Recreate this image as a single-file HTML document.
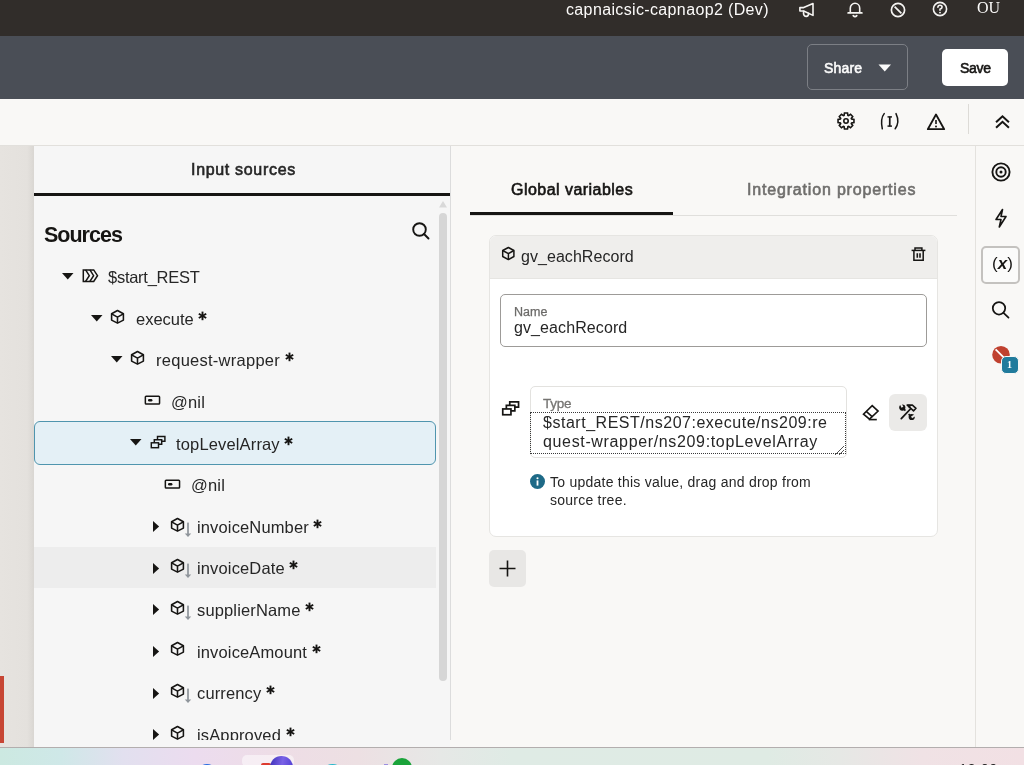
<!DOCTYPE html>
<html><head><meta charset="utf-8"><title>Integration</title>
<style>
html,body{margin:0;padding:0;}
body{width:1024px;height:765px;position:relative;overflow:hidden;background:#f9f8f6;font-family:"Liberation Sans",sans-serif;}
.t{position:absolute;white-space:nowrap;will-change:transform;}
.r{position:absolute;display:block;}
.ast{display:inline-block;vertical-align:4.1px;margin-left:4.6px;}
</style></head><body>
<div class="r" style="left:0px;top:0px;width:1024px;height:36px;background:#312d2a"></div>
<div class="t" style="left:566px;top:-0.34px;font-size:16px;line-height:20px;font-weight:400;color:#fcfbfa;letter-spacing:0.36px;font-family:'Liberation Sans', sans-serif;">capnaicsic-capnaop2 (Dev)</div>
<svg class="r" style="left:797px;top:0px;" width="20" height="20" viewBox="0 0 20 20"><g fill="none" stroke="#f5f4f2" stroke-width="1.6" stroke-linejoin="round" stroke-linecap="round"><path d="M2.9 7.6 H6.7 L16 3.6 V15.4 L6.7 11 H2.9 Z"/><path d="M6.6 11.2 Q6 16.6 9.2 16.4 Q11.6 16.2 11.6 13.4"/></g></svg>
<svg class="r" style="left:846px;top:0px;" width="18" height="20" viewBox="0 0 18 20"><g fill="none" stroke="#f5f4f2" stroke-width="1.6" stroke-linecap="round" stroke-linejoin="round"><path d="M4.3 12.6 V8.2 A4.7 4.9 0 0 1 13.7 8.2 V12.6"/><path d="M7.2 15.6 Q9 17.6 10.8 15.6"/></g><path d="M2.2 12.9 H15.8" stroke="#f5f4f2" stroke-width="1.9" stroke-linecap="round"/></svg>
<svg class="r" style="left:889.3px;top:0.7px;" width="18" height="18" viewBox="0 0 18 18"><g fill="none" stroke="#f5f4f2" stroke-width="1.7"><circle cx="9" cy="9" r="6.6"/><path d="M5.6 5.6 L12.4 12.4"/></g></svg>
<svg class="r" style="left:930.5px;top:0.2px;" width="18" height="18" viewBox="0 0 18 18"><g fill="none" stroke="#f5f4f2" stroke-width="1.6" stroke-linecap="round"><circle cx="9" cy="9" r="6.6"/><path d="M6.9 7.3 Q7 5.2 9 5.2 Q11.1 5.2 11.1 7.1 Q11.1 8.5 9 9.3 V10.2"/></g><circle cx="9" cy="12.6" r="0.95" fill="#f5f4f2"/></svg>
<div class="t" style="left:977.3px;top:-2.04px;font-size:16px;line-height:20px;font-weight:400;color:#fcfbfa;letter-spacing:0px;font-family:'Liberation Serif', serif;">OU</div>
<div class="r" style="left:0px;top:36px;width:1024px;height:63px;background:#4a4e56"></div>
<div class="r" style="left:807px;top:44px;width:101px;height:46px;border:1px solid #7c7f85;border-radius:5px;box-sizing:border-box"></div>
<div class="t" style="left:823.8px;top:59.15px;font-size:14px;line-height:18px;font-weight:400;color:#fbfbfb;letter-spacing:0.2px;font-family:'Liberation Sans', sans-serif;-webkit-text-stroke:0.6px currentColor;">Share</div>
<svg class="r" style="left:878px;top:64px;" width="14" height="8" viewBox="0 0 14 8"><path d="M0.5 0.5 H13 L6.75 7.5 Z" fill="#fbfbfb"/></svg>
<div class="r" style="left:942px;top:49px;width:66px;height:37px;background:#ffffff;border-radius:5px"></div>
<div class="t" style="left:959.6px;top:59.15px;font-size:14px;line-height:18px;font-weight:400;color:#161513;letter-spacing:-0.3px;font-family:'Liberation Sans', sans-serif;-webkit-text-stroke:0.6px currentColor;">Save</div>
<div class="r" style="left:0px;top:99px;width:1024px;height:46px;background:#f9f8f6"></div>
<div class="r" style="left:0px;top:145px;width:1024px;height:1px;background:#e2e0dc"></div>
<svg class="r" style="left:835.5px;top:111.2px;" width="20" height="20" viewBox="0 0 20 20"><g fill="none" stroke="#161513" stroke-width="1.6" stroke-linejoin="miter"><path d="M8.09 4.42 L8.47 2.05 L11.53 2.05 L11.91 4.42 L12.59 4.70 L14.54 3.29 L16.71 5.46 L15.30 7.41 L15.58 8.09 L17.95 8.47 L17.95 11.53 L15.58 11.91 L15.30 12.59 L16.71 14.54 L14.54 16.71 L12.59 15.30 L11.91 15.58 L11.53 17.95 L8.47 17.95 L8.09 15.58 L7.41 15.30 L5.46 16.71 L3.29 14.54 L4.70 12.59 L4.42 11.91 L2.05 11.53 L2.05 8.47 L4.42 8.09 L4.70 7.41 L3.29 5.46 L5.46 3.29 L7.41 4.70 Z"/><circle cx="10" cy="10" r="2.2"/></g></svg>
<svg class="r" style="left:879px;top:112px;" width="22" height="19" viewBox="0 0 22 19"><g fill="none" stroke="#161513" stroke-width="1.5" stroke-linecap="round"><path d="M5.2 1.6 Q1.2 6.5 3.3 16.8"/><path d="M17 1.6 Q21 10 16.2 16.8"/></g><g fill="#161513"><rect x="9.9" y="4.5" width="1.7" height="10"/><rect x="8.5" y="4.2" width="4.5" height="1.4"/><rect x="8.5" y="13.4" width="4.5" height="1.4"/></g></svg>
<svg class="r" style="left:926px;top:112px;" width="20" height="19" viewBox="0 0 20 19"><g fill="none" stroke="#161513" stroke-width="1.8" stroke-linejoin="round"><path d="M10 2.5 L18.2 17.2 H1.8 Z"/></g><path d="M10 8 V12" stroke="#161513" stroke-width="1.6"/><circle cx="10" cy="14.4" r="1" fill="#161513"/></svg>
<div class="r" style="left:968px;top:104px;width:1px;height:30px;background:#dddbd7"></div>
<svg class="r" style="left:994px;top:114px;" width="17" height="16" viewBox="0 0 17 16"><g fill="none" stroke="#161513" stroke-width="2" stroke-linecap="square"><path d="M2.8 7.5 L8.5 2.3 L14.2 7.5"/><path d="M2.8 13 L8.5 7.8 L14.2 13"/></g></svg>
<div class="r" style="left:0px;top:146px;width:34px;height:601px;background:linear-gradient(90deg,#e6e3df 0,#e4e1dd 80%,#d9d6d2 100%)"></div>
<div class="r" style="left:0px;top:676px;width:4px;height:67px;background:#c74634"></div>
<div class="r" style="left:34px;top:146px;width:416px;height:601px;background:#f6f6f6"></div>
<div class="r" style="left:450px;top:146px;width:1px;height:594px;background:#dcdcdc"></div>
<div class="t" style="left:190.8px;top:160.16px;font-size:16px;line-height:20px;font-weight:400;color:#262626;letter-spacing:0.68px;font-family:'Liberation Sans', sans-serif;-webkit-text-stroke:0.6px currentColor;">Input sources</div>
<div class="r" style="left:34px;top:193px;width:416px;height:3px;background:#161513"></div>
<div class="t" style="left:44.4px;top:222.15px;font-size:21.5px;line-height:27px;font-weight:700;color:#161513;letter-spacing:-1.0px;font-family:'Liberation Sans', sans-serif;">Sources</div>
<svg class="r" style="left:409px;top:221px;" width="22" height="20" viewBox="0 0 22 20"><g fill="none" stroke="#161513" stroke-width="1.9" stroke-linecap="round"><circle cx="10.5" cy="8.5" r="6.3"/><path d="M15 13 L19.5 17.5"/></g></svg>
<svg class="r" style="left:438px;top:200px;" width="10" height="8" viewBox="0 0 10 8"><path d="M1 7.5 L5 1 L9 7.5 Z" fill="#d9d9d9"/></svg>
<div class="r" style="left:439px;top:213px;width:8px;height:468px;background:#d6d6d6;border-radius:4px"></div>
<div class="r" style="left:34px;top:421px;width:402px;height:44px;background:#e4f0f6;border:1px solid #4f95ae;border-radius:6px;box-sizing:border-box"></div>
<div class="r" style="left:34px;top:547px;width:402px;height:41px;background:#ededed"></div>
<div class="clip" style="position:absolute;left:34px;top:146px;width:416px;height:594px;overflow:hidden"><div style="position:absolute;left:-34px;top:-146px;width:1024px;height:765px"><svg class="r" style="left:62px;top:273.0px;" width="12" height="7" viewBox="0 0 12 7"><path d="M0 0 H11.5 L5.75 6.5 Z" fill="#161513"/></svg>
<svg class="r" style="left:81.5px;top:268.5px;" width="17" height="14" viewBox="0 0 17 14"><g fill="none" stroke="#161513" stroke-width="1.5" stroke-linejoin="miter"><path d="M1.3 0.9 H11.7 L15.5 6.65 L11.7 12.4 H1.3 Z"/><path d="M3.6 0.9 L7.3 6.65 L3.6 12.4"/><path d="M7.9 0.9 L11.6 6.65 L7.9 12.4"/></g></svg>
<div class="t" style="left:108px;top:267.28px;font-size:16.5px;line-height:21px;font-weight:400;color:#262626;letter-spacing:-0.27px;font-family:'Liberation Sans', sans-serif;">$start_REST</div>
<svg class="r" style="left:91px;top:314.6px;" width="12" height="7" viewBox="0 0 12 7"><path d="M0 0 H11.5 L5.75 6.5 Z" fill="#161513"/></svg>
<svg class="r" style="left:110.2px;top:308.6px;" width="22" height="21" viewBox="0 0 22 21"><g fill="none" stroke="#161513" stroke-width="1.55" stroke-linejoin="round"><path d="M7.5 1.5 L13.4 4.8 V11.1 L7.5 14.1 L1.6 11.1 V4.8 Z"/><path d="M1.6 4.8 L7.5 8.2 L13.4 4.8 M7.5 8.2 V14.1"/></g></svg>
<div class="t" style="left:136px;top:308.88px;font-size:16.5px;line-height:21px;font-weight:400;color:#262626;letter-spacing:0.0px;font-family:'Liberation Sans', sans-serif;">execute<svg class="ast" width="9" height="10" viewBox="0 0 9 10"><g stroke="#161513" stroke-width="1.9"><path d="M4.5 0.6 V9.2"/><path d="M0.8 2.75 L8.2 7.05"/><path d="M0.8 7.05 L8.2 2.75"/></g></svg></div>
<svg class="r" style="left:110.5px;top:356.2px;" width="12" height="7" viewBox="0 0 12 7"><path d="M0 0 H11.5 L5.75 6.5 Z" fill="#161513"/></svg>
<svg class="r" style="left:130.2px;top:350.2px;" width="22" height="21" viewBox="0 0 22 21"><g fill="none" stroke="#161513" stroke-width="1.55" stroke-linejoin="round"><path d="M7.5 1.5 L13.4 4.8 V11.1 L7.5 14.1 L1.6 11.1 V4.8 Z"/><path d="M1.6 4.8 L7.5 8.2 L13.4 4.8 M7.5 8.2 V14.1"/></g></svg>
<div class="t" style="left:156.3px;top:350.48px;font-size:16.5px;line-height:21px;font-weight:400;color:#262626;letter-spacing:0.26px;font-family:'Liberation Sans', sans-serif;">request-wrapper<svg class="ast" width="9" height="10" viewBox="0 0 9 10"><g stroke="#161513" stroke-width="1.9"><path d="M4.5 0.6 V9.2"/><path d="M0.8 2.75 L8.2 7.05"/><path d="M0.8 7.05 L8.2 2.75"/></g></svg></div>
<svg class="r" style="left:144.2px;top:395.3px;" width="17" height="11" viewBox="0 0 17 11"><rect x="1.35" y="1.25" width="14.2" height="7.8" rx="0.8" fill="none" stroke="#161513" stroke-width="1.5"/><rect x="4" y="4" width="4.4" height="2.5" rx="1.2" fill="#161513"/></svg>
<div class="t" style="left:171.2px;top:392.08px;font-size:16.5px;line-height:21px;font-weight:400;color:#262626;letter-spacing:0.2px;font-family:'Liberation Sans', sans-serif;">@nil</div>
<svg class="r" style="left:130.1px;top:439.4px;" width="12" height="7" viewBox="0 0 12 7"><path d="M0 0 H11.5 L5.75 6.5 Z" fill="#161513"/></svg>
<svg class="r" style="left:150px;top:435px;" width="17" height="14" viewBox="0 0 17 14"><g fill="none" stroke="#161513" stroke-width="1.45"><rect x="1.3" y="7.8" width="7.2" height="4.9"/><path d="M4.3 7.8 V4.8 H11.7 V9.3 H8.5"/><path d="M7.5 4.8 V1.45 H14.9 V6.2 H11.7"/></g></svg>
<div class="t" style="left:176.2px;top:433.68px;font-size:16.5px;line-height:21px;font-weight:400;color:#262626;letter-spacing:0.15px;font-family:'Liberation Sans', sans-serif;">topLevelArray<svg class="ast" width="9" height="10" viewBox="0 0 9 10"><g stroke="#161513" stroke-width="1.9"><path d="M4.5 0.6 V9.2"/><path d="M0.8 2.75 L8.2 7.05"/><path d="M0.8 7.05 L8.2 2.75"/></g></svg></div>
<svg class="r" style="left:164.2px;top:478.5px;" width="17" height="11" viewBox="0 0 17 11"><rect x="1.35" y="1.25" width="14.2" height="7.8" rx="0.8" fill="none" stroke="#161513" stroke-width="1.5"/><rect x="4" y="4" width="4.4" height="2.5" rx="1.2" fill="#161513"/></svg>
<div class="t" style="left:190.9px;top:475.28px;font-size:16.5px;line-height:21px;font-weight:400;color:#262626;letter-spacing:0.2px;font-family:'Liberation Sans', sans-serif;">@nil</div>
<svg class="r" style="left:153px;top:521.1px;" width="7" height="12" viewBox="0 0 7 12"><path d="M0 0 V11 L6.1 5.5 Z" fill="#161513"/></svg>
<svg class="r" style="left:169.6px;top:516.6px;" width="22" height="21" viewBox="0 0 22 21"><g fill="none" stroke="#161513" stroke-width="1.55" stroke-linejoin="round"><path d="M7.5 1.5 L13.4 4.8 V11.1 L7.5 14.1 L1.6 11.1 V4.8 Z"/><path d="M1.6 4.8 L7.5 8.2 L13.4 4.8 M7.5 8.2 V14.1"/></g><rect x="17.15" y="5.6" width="1.7" height="11.5" fill="#8f959b"/><path d="M14.8 16.6 H21.2 L18 20 Z" fill="#8f959b"/></svg>
<div class="t" style="left:196.6px;top:516.88px;font-size:16.5px;line-height:21px;font-weight:400;color:#262626;letter-spacing:0.14px;font-family:'Liberation Sans', sans-serif;">invoiceNumber<svg class="ast" width="9" height="10" viewBox="0 0 9 10"><g stroke="#161513" stroke-width="1.9"><path d="M4.5 0.6 V9.2"/><path d="M0.8 2.75 L8.2 7.05"/><path d="M0.8 7.05 L8.2 2.75"/></g></svg></div>
<svg class="r" style="left:153px;top:562.7px;" width="7" height="12" viewBox="0 0 7 12"><path d="M0 0 V11 L6.1 5.5 Z" fill="#161513"/></svg>
<svg class="r" style="left:169.6px;top:558.2px;" width="22" height="21" viewBox="0 0 22 21"><g fill="none" stroke="#161513" stroke-width="1.55" stroke-linejoin="round"><path d="M7.5 1.5 L13.4 4.8 V11.1 L7.5 14.1 L1.6 11.1 V4.8 Z"/><path d="M1.6 4.8 L7.5 8.2 L13.4 4.8 M7.5 8.2 V14.1"/></g><rect x="17.15" y="5.6" width="1.7" height="11.5" fill="#8f959b"/><path d="M14.8 16.6 H21.2 L18 20 Z" fill="#8f959b"/></svg>
<div class="t" style="left:196.6px;top:558.48px;font-size:16.5px;line-height:21px;font-weight:400;color:#262626;letter-spacing:0.14px;font-family:'Liberation Sans', sans-serif;">invoiceDate<svg class="ast" width="9" height="10" viewBox="0 0 9 10"><g stroke="#161513" stroke-width="1.9"><path d="M4.5 0.6 V9.2"/><path d="M0.8 2.75 L8.2 7.05"/><path d="M0.8 7.05 L8.2 2.75"/></g></svg></div>
<svg class="r" style="left:153px;top:604.3px;" width="7" height="12" viewBox="0 0 7 12"><path d="M0 0 V11 L6.1 5.5 Z" fill="#161513"/></svg>
<svg class="r" style="left:169.6px;top:599.8px;" width="22" height="21" viewBox="0 0 22 21"><g fill="none" stroke="#161513" stroke-width="1.55" stroke-linejoin="round"><path d="M7.5 1.5 L13.4 4.8 V11.1 L7.5 14.1 L1.6 11.1 V4.8 Z"/><path d="M1.6 4.8 L7.5 8.2 L13.4 4.8 M7.5 8.2 V14.1"/></g><rect x="17.15" y="5.6" width="1.7" height="11.5" fill="#8f959b"/><path d="M14.8 16.6 H21.2 L18 20 Z" fill="#8f959b"/></svg>
<div class="t" style="left:196.6px;top:600.08px;font-size:16.5px;line-height:21px;font-weight:400;color:#262626;letter-spacing:0.14px;font-family:'Liberation Sans', sans-serif;">supplierName<svg class="ast" width="9" height="10" viewBox="0 0 9 10"><g stroke="#161513" stroke-width="1.9"><path d="M4.5 0.6 V9.2"/><path d="M0.8 2.75 L8.2 7.05"/><path d="M0.8 7.05 L8.2 2.75"/></g></svg></div>
<svg class="r" style="left:153px;top:645.9000000000001px;" width="7" height="12" viewBox="0 0 7 12"><path d="M0 0 V11 L6.1 5.5 Z" fill="#161513"/></svg>
<svg class="r" style="left:169.6px;top:641.4000000000001px;" width="22" height="21" viewBox="0 0 22 21"><g fill="none" stroke="#161513" stroke-width="1.55" stroke-linejoin="round"><path d="M7.5 1.5 L13.4 4.8 V11.1 L7.5 14.1 L1.6 11.1 V4.8 Z"/><path d="M1.6 4.8 L7.5 8.2 L13.4 4.8 M7.5 8.2 V14.1"/></g></svg>
<div class="t" style="left:196.6px;top:641.68px;font-size:16.5px;line-height:21px;font-weight:400;color:#262626;letter-spacing:0.14px;font-family:'Liberation Sans', sans-serif;">invoiceAmount<svg class="ast" width="9" height="10" viewBox="0 0 9 10"><g stroke="#161513" stroke-width="1.9"><path d="M4.5 0.6 V9.2"/><path d="M0.8 2.75 L8.2 7.05"/><path d="M0.8 7.05 L8.2 2.75"/></g></svg></div>
<svg class="r" style="left:153px;top:687.5px;" width="7" height="12" viewBox="0 0 7 12"><path d="M0 0 V11 L6.1 5.5 Z" fill="#161513"/></svg>
<svg class="r" style="left:169.6px;top:683.0px;" width="22" height="21" viewBox="0 0 22 21"><g fill="none" stroke="#161513" stroke-width="1.55" stroke-linejoin="round"><path d="M7.5 1.5 L13.4 4.8 V11.1 L7.5 14.1 L1.6 11.1 V4.8 Z"/><path d="M1.6 4.8 L7.5 8.2 L13.4 4.8 M7.5 8.2 V14.1"/></g><rect x="17.15" y="5.6" width="1.7" height="11.5" fill="#8f959b"/><path d="M14.8 16.6 H21.2 L18 20 Z" fill="#8f959b"/></svg>
<div class="t" style="left:196.6px;top:683.28px;font-size:16.5px;line-height:21px;font-weight:400;color:#262626;letter-spacing:0.14px;font-family:'Liberation Sans', sans-serif;">currency<svg class="ast" width="9" height="10" viewBox="0 0 9 10"><g stroke="#161513" stroke-width="1.9"><path d="M4.5 0.6 V9.2"/><path d="M0.8 2.75 L8.2 7.05"/><path d="M0.8 7.05 L8.2 2.75"/></g></svg></div>
<svg class="r" style="left:153px;top:729.1px;" width="7" height="12" viewBox="0 0 7 12"><path d="M0 0 V11 L6.1 5.5 Z" fill="#161513"/></svg>
<svg class="r" style="left:169.6px;top:724.6px;" width="22" height="21" viewBox="0 0 22 21"><g fill="none" stroke="#161513" stroke-width="1.55" stroke-linejoin="round"><path d="M7.5 1.5 L13.4 4.8 V11.1 L7.5 14.1 L1.6 11.1 V4.8 Z"/><path d="M1.6 4.8 L7.5 8.2 L13.4 4.8 M7.5 8.2 V14.1"/></g></svg>
<div class="t" style="left:196.6px;top:724.88px;font-size:16.5px;line-height:21px;font-weight:400;color:#262626;letter-spacing:0.14px;font-family:'Liberation Sans', sans-serif;">isApproved<svg class="ast" width="9" height="10" viewBox="0 0 9 10"><g stroke="#161513" stroke-width="1.9"><path d="M4.5 0.6 V9.2"/><path d="M0.8 2.75 L8.2 7.05"/><path d="M0.8 7.05 L8.2 2.75"/></g></svg></div>
</div></div>
<div class="r" style="left:451px;top:146px;width:524px;height:601px;background:#f9f8f6"></div>
<div class="r" style="left:975px;top:146px;width:1px;height:601px;background:#e4e2de"></div>
<div class="r" style="left:976px;top:146px;width:48px;height:601px;background:#f9f8f6"></div>
<div class="t" style="left:511.1px;top:179.66px;font-size:16px;line-height:20px;font-weight:400;color:#161513;letter-spacing:0.46px;font-family:'Liberation Sans', sans-serif;-webkit-text-stroke:0.6px currentColor;">Global variables</div>
<div class="t" style="left:747.4px;top:179.86px;font-size:16px;line-height:20px;font-weight:400;color:#6f6e6c;letter-spacing:0.82px;font-family:'Liberation Sans', sans-serif;-webkit-text-stroke:0.6px currentColor;">Integration properties</div>
<div class="r" style="left:470px;top:215px;width:487px;height:1px;background:#e0dfdc"></div>
<div class="r" style="left:470px;top:212px;width:203px;height:3px;background:#161513"></div>
<div class="r" style="left:489px;top:235px;width:449px;height:302px;background:#ffffff;border:1px solid #e6e5e2;border-radius:7px;box-sizing:border-box"></div>
<div class="r" style="left:490px;top:236px;width:447px;height:42px;background:#efeeec;border-radius:6px 6px 0 0;border-bottom:1px solid #e6e5e2"></div>
<svg class="r" style="left:501px;top:246px;" width="15" height="16" viewBox="0 0 15 16"><g fill="none" stroke="#161513" stroke-width="1.5" stroke-linejoin="round"><path d="M7.4 1.5 L12.9 4.5 V10.5 L7.4 13.6 L1.7 10.5 V4.5 Z"/><path d="M1.7 4.5 L7.4 7.7 L12.9 4.5 M7.4 7.7 V13.6"/></g></svg>
<div class="t" style="left:521.4px;top:246.86px;font-size:16px;line-height:20px;font-weight:400;color:#262626;letter-spacing:0.05px;font-family:'Liberation Sans', sans-serif;">gv_eachRecord</div>
<svg class="r" style="left:910px;top:245px;" width="18" height="18" viewBox="0 0 18 18"><g fill="none" stroke="#161513" stroke-width="1.5"><path d="M1.6 5.4 H15.4"/><path d="M5 5.4 V2.9 H11.9 V5.4"/><path d="M3.9 5.4 V15.2 H13.2 V5.4"/><path d="M7.3 8.2 V12.7 M10 8.2 V12.7" stroke-width="1.6"/></g></svg>
<div class="r" style="left:500px;top:294px;width:427px;height:53px;border:1px solid #9d9b98;border-radius:5px;box-sizing:border-box;background:#fff"></div>
<div class="t" style="left:514px;top:303.67px;font-size:12.5px;line-height:16px;font-weight:400;color:#6b6a68;letter-spacing:0px;font-family:'Liberation Sans', sans-serif;-webkit-text-stroke:0.25px currentColor;">Name</div>
<div class="t" style="left:514px;top:317.86px;font-size:16px;line-height:20px;font-weight:400;color:#262626;letter-spacing:0.1px;font-family:'Liberation Sans', sans-serif;">gv_eachRecord</div>
<svg class="r" style="left:500px;top:398px;" width="22" height="20" viewBox="0 0 22 20"><g fill="none" stroke="#161513" stroke-width="1.7"><rect x="2.75" y="10.95" width="8.2" height="5.8"/><path d="M6.35 10.95 V7.35 H14.85 V12.85 H10.95"/><path d="M9.75 7.35 V3.85 H18.55 V9.05 H14.85"/></g></svg>
<div class="r" style="left:530px;top:386px;width:317px;height:72px;border:1px solid #e3e2df;border-radius:5px;box-sizing:border-box;background:#fff"></div>
<div class="t" style="left:543.2px;top:394.92px;font-size:13.5px;line-height:17px;font-weight:400;color:#757472;letter-spacing:-0.25px;font-family:'Liberation Sans', sans-serif;-webkit-text-stroke:0.3px currentColor;">Type</div>
<div class="r" style="left:530px;top:412px;width:316px;height:42px;border:1px dotted #3a3a3a;box-sizing:border-box"></div>
<div class="t" style="left:543px;top:412.76px;font-size:16px;line-height:20px;font-weight:400;color:#262626;letter-spacing:0.52px;font-family:'Liberation Sans', sans-serif;">$start_REST/ns207:execute/ns209:re</div>
<div class="t" style="left:543px;top:432.36px;font-size:16px;line-height:20px;font-weight:400;color:#262626;letter-spacing:0.65px;font-family:'Liberation Sans', sans-serif;">quest-wrapper/ns209:topLevelArray</div>
<svg class="r" style="left:833px;top:444px;" width="12" height="12" viewBox="0 0 12 12"><g stroke="#555" stroke-width="1"><path d="M2 11 L11 2"/><path d="M6 11 L11 6"/></g></svg>
<svg class="r" style="left:860px;top:403px;" width="21" height="20" viewBox="0 0 21 20"><g fill="none" stroke="#161513" stroke-width="1.6" stroke-linejoin="miter"><path d="M12.2 2.6 L18.1 8.1 L9.5 16.2 L3.5 11.1 Z"/><path d="M6.2 8.4 L12.4 13.9"/><path d="M8.8 16.6 H16.8"/></g></svg>
<div class="r" style="left:889px;top:394px;width:38px;height:37px;background:#ebeae8;border-radius:6px"></div>
<svg class="r" style="left:895px;top:400px;" width="26" height="24" viewBox="0 0 26 24"><path d="M6.3 18.65 L15.4 9" stroke="#161513" stroke-width="1.8" stroke-linecap="round"/><path d="M12.2 5.1 H17.4 L21 8.3 L18.5 10.9 L15.2 7.7 Z" fill="none" stroke="#161513" stroke-width="1.6" stroke-linejoin="round"/><path d="M12.5 4.8 H15 L15.6 7.2 L14 8.5 Z" fill="#161513"/><circle cx="7.3" cy="7.6" r="3.1" fill="#161513"/><path d="M7.4 7.3 L5.6 3.6" stroke="#ebeae8" stroke-width="2"/><path d="M8.5 8.6 L10.4 10.6" stroke="#161513" stroke-width="1.7"/><circle cx="16.7" cy="17" r="3.1" fill="#161513"/><path d="M16.6 17.3 L20.6 14.9" stroke="#ebeae8" stroke-width="2"/><path d="M15.4 15.8 L13.6 14.2" stroke="#161513" stroke-width="1.7"/></svg>
<svg class="r" style="left:530px;top:474px;" width="15" height="15" viewBox="0 0 15 15"><circle cx="7.5" cy="7.5" r="7.5" fill="#1e6a87"/><rect x="6.6" y="6.4" width="1.8" height="5.2" fill="#fff"/><circle cx="7.5" cy="4.2" r="1.05" fill="#fff"/></svg>
<div class="t" style="left:550.3px;top:473.15px;font-size:14px;line-height:18px;font-weight:400;color:#262626;letter-spacing:0.24px;font-family:'Liberation Sans', sans-serif;">To update this value, drag and drop from</div>
<div class="t" style="left:550.3px;top:490.75px;font-size:14px;line-height:18px;font-weight:400;color:#262626;letter-spacing:0.24px;font-family:'Liberation Sans', sans-serif;">source tree.</div>
<div class="r" style="left:489px;top:550px;width:37px;height:37px;background:#e8e7e5;border-radius:5px"></div>
<svg class="r" style="left:498px;top:559px;" width="19" height="19" viewBox="0 0 19 19"><g stroke="#161513" stroke-width="1.6"><path d="M9.5 1.5 V17.5 M1.5 9.5 H17.5"/></g></svg>
<svg class="r" style="left:990px;top:161px;" width="22" height="22" viewBox="0 0 22 22"><g fill="none" stroke="#161513" stroke-width="1.9"><circle cx="11" cy="11" r="8.6"/><circle cx="11" cy="11" r="4.7"/></g><circle cx="11" cy="11" r="1.5" fill="#161513"/></svg>
<svg class="r" style="left:993px;top:208px;" width="16" height="21" viewBox="0 0 16 21"><path d="M9.5 1.5 L3 11.5 H8 L6.3 19 L13 8.5 H8 Z" fill="none" stroke="#161513" stroke-width="1.6" stroke-linejoin="round"/></svg>
<div class="r" style="left:981px;top:246px;width:39px;height:38px;border:2px solid #c4c2bf;border-radius:5px;box-sizing:border-box;background:#fbfbfa"></div>
<div class="t" style="left:991.5px;top:253.21px;font-size:17px;line-height:21px;font-weight:400;color:#161513;letter-spacing:0px;font-family:'Liberation Sans', sans-serif;">(<i style='font-weight:700'>x</i>)</div>
<svg class="r" style="left:990px;top:300px;" width="22" height="20" viewBox="0 0 22 20"><g fill="none" stroke="#161513" stroke-width="1.75" stroke-linecap="round"><circle cx="9" cy="8.3" r="6.2"/><path d="M13.5 12.8 L18.5 17.6"/></g></svg>
<svg class="r" style="left:991px;top:345px;" width="20" height="20" viewBox="0 0 20 20"><circle cx="10" cy="9.8" r="8.8" fill="#c0412f"/><path d="M4.6 4.4 L15.4 15.2" stroke="#fff" stroke-width="1.8"/></svg>
<div class="r" style="left:1001px;top:355.5px;width:18px;height:18.5px;background:#217b9c;border-radius:5px;border:1px solid #f9f8f6;box-sizing:border-box"></div>
<div class="t" style="left:1007px;top:359.04px;font-size:10px;line-height:12px;font-weight:700;color:#ffffff;letter-spacing:0px;font-family:'Liberation Serif', serif;">1</div>
<div class="r" style="left:0px;top:747px;width:1024px;height:18px;background:linear-gradient(90deg,#cce9e1 0%,#cfe8e8 6%,#e2e0ef 12%,#ecdcef 19%,#eedde6 27%,#ede0e3 35%,#e6e8e6 43%,#dfebe5 50%,#dfebe4 75%,#e6e8e5 82%,#f0e2e5 90%,#f2e0e4 100%)"></div>
<div class="r" style="left:0px;top:747px;width:1024px;height:1px;background:#b3aeae"></div>
<div class="r" style="left:242px;top:755px;width:52px;height:12px;background:rgba(255,255,255,0.5);border-radius:5px"></div>
<div class="r" style="left:198px;top:763.5px;width:18px;height:17.5px;background:#2a6ee0;border-radius:50%"></div>
<div class="r" style="left:261px;top:763px;width:10px;height:10px;background:#dd3b2f;border-radius:2px"></div>
<div class="r" style="left:269.5px;top:756.3px;width:23.0px;height:22.700000000000045px;background:linear-gradient(100deg,#3b2fb8,#7a62e6 50%,#4a3ad0);border-radius:50%"></div>
<div class="r" style="left:323px;top:763.5px;width:19px;height:16.5px;background:#2ab8cc;border-radius:50%"></div>
<div class="r" style="left:383.5px;top:764px;width:4.0px;height:6px;background:#9b8ee0"></div>
<div class="r" style="left:392.3px;top:757.5px;width:20.0px;height:20.0px;background:#1aa33a;border-radius:50%"></div>
<div class="t" style="left:959px;top:760.48px;font-size:14.5px;line-height:18px;font-weight:400;color:#222222;letter-spacing:0.5px;font-family:'Liberation Sans', sans-serif;">12:00</div>
</body></html>
